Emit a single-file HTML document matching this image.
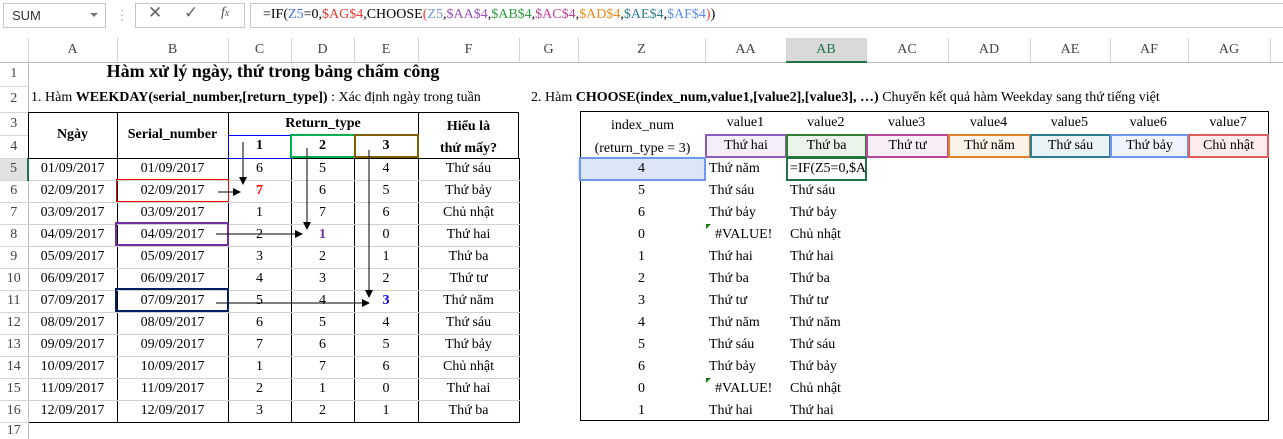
<!DOCTYPE html>
<html><head><meta charset="utf-8"><style>
*{box-sizing:border-box;margin:0;padding:0}
body{width:1283px;height:433px;overflow:hidden;background:#fff;font-family:"Liberation Serif",serif;font-size:14px;color:#000;position:relative}
.abs{position:absolute}
table{position:absolute;left:0;top:38px;border-collapse:collapse;table-layout:fixed;width:1283px}
td{padding:0;text-align:center;white-space:nowrap;overflow:hidden;vertical-align:middle;line-height:16px}
.ch{height:24px;border-right:1px solid #d4d4d4;border-bottom:1px solid #bdbdbd;color:#444;font-size:14px;background:#fff}
.rh{border-right:1px solid #bdbdbd;border-bottom:1px solid #d4d4d4;color:#444;background:#fff}
.g td.d{border-left:1px solid #000;border-right:1px solid #000;border-bottom:1px solid #d0d0d0}
.b{font-weight:bold}
.l{text-align:left;padding-left:4px}
.box{position:absolute;border:2px solid}
</style></head><body>
<div class="abs" style="left:0;top:0;width:1283px;height:32px;background:#fff"></div>
<div class="abs" style="left:3px;top:3px;width:103px;height:25px;border:1px solid #c6c6c6;font-family:'Liberation Sans',sans-serif;font-size:13px;color:#333;padding:4px 0 0 8px">SUM</div>
<div class="abs" style="left:90px;top:13px;border-left:4px solid transparent;border-right:4px solid transparent;border-top:4px solid #777"></div>
<div class="abs" style="left:120px;top:8px;color:#999;font-size:12px;line-height:5px">·<br>·<br>·</div>
<div class="abs" style="left:135px;top:3px;width:110px;height:25px;border:1px solid #c6c6c6"></div>
<div class="abs" style="left:148px;top:3px;font-family:'Liberation Sans',sans-serif;font-size:17px;color:#666">✕</div>
<div class="abs" style="left:184px;top:3px;font-size:17px;color:#666">✓</div>
<div class="abs" style="left:221px;top:5px;font-style:italic;font-size:14px;color:#555">f<span style="font-size:10px">x</span></div>
<div class="abs" style="left:250px;top:3px;width:1033px;height:25px;border:1px solid #c6c6c6;border-right:none"></div>
<div class="abs" style="left:263px;top:7px;font-size:14px;white-space:nowrap">=IF(<span style="color:#4a73e8">Z5</span>=0,<span style="color:#e53935">$AG$4</span>,CHOOSE<span style="color:#e53935">(</span><span style="color:#6d8fe6">Z5</span>,<span style="color:#9c4fc0">$AA$4</span>,<span style="color:#2e9d43">$AB$4</span>,<span style="color:#c2409d">$AC$4</span>,<span style="color:#e88a1a">$AD$4</span>,<span style="color:#2e7d8c">$AE$4</span>,<span style="color:#5b8def">$AF$4</span><span style="color:#e53935">)</span>)</div>

<table>
<colgroup><col style="width:28px"><col style="width:89px"><col style="width:111px"><col style="width:63px"><col style="width:63px"><col style="width:64px"><col style="width:101px"><col style="width:59px"><col style="width:127px"><col style="width:81px"><col style="width:80px"><col style="width:82px"><col style="width:82px"><col style="width:80px"><col style="width:78px"><col style="width:82px"><col style="width:13px"></colgroup>
<tr><td class="ch" style="background:#fff"></td><td class="ch">A</td><td class="ch">B</td><td class="ch">C</td><td class="ch">D</td><td class="ch">E</td><td class="ch">F</td><td class="ch">G</td><td class="ch">Z</td><td class="ch">AA</td><td class="ch" style="background:#d9d9d9;border-bottom:2px solid #217346;color:#217346">AB</td><td class="ch">AC</td><td class="ch">AD</td><td class="ch">AE</td><td class="ch">AF</td><td class="ch">AG</td><td class="ch"></td></tr>
<tr style="height:24px"><td class="rh">1</td><td colspan="16"></td></tr>
<tr style="height:26px"><td class="rh">2</td><td colspan="16"></td></tr>
<tr style="height:23px"><td class="rh">3</td><td colspan="16"></td></tr>
<tr style="height:23px"><td class="rh">4</td><td colspan="16"></td></tr>
<tr class="g" style="height:22px"><td class="rh" style="background:#e1e1e1;border-right:2px solid #217346">5</td><td class="d">01/09/2017</td><td class="d">01/09/2017</td><td class="d">6</td><td class="d">5</td><td class="d">4</td><td class="d">Thứ sáu</td><td></td><td style="background:#dce6f7">4</td><td class="l">Thứ năm</td><td class="l">=IF(Z5=0,$A</td><td colspan="6"></td></tr>
<tr class="g" style="height:22px"><td class="rh">6</td><td class="d">02/09/2017</td><td class="d">02/09/2017</td><td class="d b" style="color:#f00">7</td><td class="d">6</td><td class="d">5</td><td class="d">Thứ bảy</td><td></td><td>5</td><td class="l">Thứ sáu</td><td class="l">Thứ sáu</td><td colspan="6"></td></tr>
<tr class="g" style="height:22px"><td class="rh">7</td><td class="d">03/09/2017</td><td class="d">03/09/2017</td><td class="d">1</td><td class="d">7</td><td class="d">6</td><td class="d">Chủ nhật</td><td></td><td>6</td><td class="l">Thứ bảy</td><td class="l">Thứ bảy</td><td colspan="6"></td></tr>
<tr class="g" style="height:22px"><td class="rh">8</td><td class="d">04/09/2017</td><td class="d">04/09/2017</td><td class="d">2</td><td class="d b" style="color:#7030a0">1</td><td class="d">0</td><td class="d">Thứ hai</td><td></td><td>0</td><td class="l" style="padding-left:10px">#VALUE!</td><td class="l">Chủ nhật</td><td colspan="6"></td></tr>
<tr class="g" style="height:22px"><td class="rh">9</td><td class="d">05/09/2017</td><td class="d">05/09/2017</td><td class="d">3</td><td class="d">2</td><td class="d">1</td><td class="d">Thứ ba</td><td></td><td>1</td><td class="l">Thứ hai</td><td class="l">Thứ hai</td><td colspan="6"></td></tr>
<tr class="g" style="height:22px"><td class="rh">10</td><td class="d">06/09/2017</td><td class="d">06/09/2017</td><td class="d">4</td><td class="d">3</td><td class="d">2</td><td class="d">Thứ tư</td><td></td><td>2</td><td class="l">Thứ ba</td><td class="l">Thứ ba</td><td colspan="6"></td></tr>
<tr class="g" style="height:22px"><td class="rh">11</td><td class="d">07/09/2017</td><td class="d">07/09/2017</td><td class="d">5</td><td class="d">4</td><td class="d b" style="color:#00f">3</td><td class="d">Thứ năm</td><td></td><td>3</td><td class="l">Thứ tư</td><td class="l">Thứ tư</td><td colspan="6"></td></tr>
<tr class="g" style="height:22px"><td class="rh">12</td><td class="d">08/09/2017</td><td class="d">08/09/2017</td><td class="d">6</td><td class="d">5</td><td class="d">4</td><td class="d">Thứ sáu</td><td></td><td>4</td><td class="l">Thứ năm</td><td class="l">Thứ năm</td><td colspan="6"></td></tr>
<tr class="g" style="height:22px"><td class="rh">13</td><td class="d">09/09/2017</td><td class="d">09/09/2017</td><td class="d">7</td><td class="d">6</td><td class="d">5</td><td class="d">Thứ bảy</td><td></td><td>5</td><td class="l">Thứ sáu</td><td class="l">Thứ sáu</td><td colspan="6"></td></tr>
<tr class="g" style="height:22px"><td class="rh">14</td><td class="d">10/09/2017</td><td class="d">10/09/2017</td><td class="d">1</td><td class="d">7</td><td class="d">6</td><td class="d">Chủ nhật</td><td></td><td>6</td><td class="l">Thứ bảy</td><td class="l">Thứ bảy</td><td colspan="6"></td></tr>
<tr class="g" style="height:22px"><td class="rh">15</td><td class="d">11/09/2017</td><td class="d">11/09/2017</td><td class="d">2</td><td class="d">1</td><td class="d">0</td><td class="d">Thứ hai</td><td></td><td>0</td><td class="l" style="padding-left:10px">#VALUE!</td><td class="l">Chủ nhật</td><td colspan="6"></td></tr>
<tr class="g" style="height:22px"><td class="rh">16</td><td class="d" style="border-bottom:1px solid #000">12/09/2017</td><td class="d" style="border-bottom:1px solid #000">12/09/2017</td><td class="d" style="border-bottom:1px solid #000">3</td><td class="d" style="border-bottom:1px solid #000">2</td><td class="d" style="border-bottom:1px solid #000">1</td><td class="d" style="border-bottom:1px solid #000">Thứ ba</td><td></td><td>1</td><td class="l">Thứ hai</td><td class="l">Thứ hai</td><td colspan="6"></td></tr>
<tr style="height:14px"><td class="rh" style="border-bottom:none">17</td><td colspan="16"></td></tr>
</table>

<div class="abs b" style="left:28px;width:490px;top:61px;text-align:center;font-size:18px">Hàm xử lý ngày, thứ trong bảng chấm công</div>
<div class="abs" style="left:31px;top:90px;white-space:nowrap">1. Hàm <b>WEEKDAY(serial_number,[return_type])</b> : Xác định ngày trong tuần</div>
<div class="abs" style="left:531px;top:90px;white-space:nowrap">2. Hàm <b>CHOOSE(index_num,value1,[value2],[value3], …)</b> Chuyển kết quả hàm Weekday sang thứ tiếng việt</div>

<div class="abs" style="left:28px;top:112px;width:491px;height:47px;border:1px solid #000;border-bottom:1px solid #000"></div>
<div class="abs" style="left:117px;top:112px;height:47px;border-left:1px solid #000"></div>
<div class="abs" style="left:228px;top:112px;height:47px;border-left:1px solid #000"></div>
<div class="abs" style="left:418px;top:112px;height:47px;border-left:1px solid #000"></div>
<div class="abs b" style="left:28px;width:89px;top:127px;text-align:center">Ngày</div>
<div class="abs b" style="left:117px;width:111px;top:127px;text-align:center">Serial_number</div>
<div class="abs b" style="left:228px;width:190px;top:116px;text-align:center">Return_type</div>
<div class="abs b" style="left:418px;width:101px;top:116px;text-align:center;line-height:22px">Hiểu là<br>thứ mấy?</div>
<div class="abs" style="left:228px;top:135px;width:64px;height:24px;border:1px solid #00f"></div>
<div class="box" style="left:290px;top:134px;width:66px;height:24px;border-color:#00b050"></div>
<div class="box" style="left:354px;top:134px;width:65px;height:24px;border-color:#7f6000"></div>
<div class="abs b" style="left:228px;width:63px;top:138px;text-align:center">1</div>
<div class="abs b" style="left:291px;width:63px;top:138px;text-align:center">2</div>
<div class="abs b" style="left:354px;width:64px;top:138px;text-align:center">3</div>

<div class="abs" style="left:116px;top:179px;width:113px;height:23px;border:1px solid #f00"></div>
<div class="box" style="left:115px;top:222px;width:114px;height:24px;border-color:#7030a0"></div>
<div class="box" style="left:115px;top:288px;width:114px;height:24px;border-color:#002060"></div>

<svg class="abs" style="left:0;top:0" width="1283" height="433">
<defs><marker id="a" markerWidth="8" markerHeight="8" refX="7" refY="4" orient="auto" markerUnits="userSpaceOnUse"><path d="M0,0 L8,4 L0,8 z" fill="#000"/></marker></defs>
<g stroke="#000" stroke-width="1" fill="none">
<line x1="243" y1="142" x2="243" y2="184" marker-end="url(#a)"/>
<line x1="218" y1="192" x2="240" y2="192" marker-end="url(#a)"/>
<line x1="307" y1="148" x2="307" y2="229" marker-end="url(#a)"/>
<line x1="216" y1="234" x2="302" y2="234" marker-end="url(#a)"/>
<line x1="369" y1="150" x2="369" y2="297" marker-end="url(#a)"/>
<line x1="216" y1="303" x2="369" y2="303" marker-end="url(#a)"/>
</g>
<path d="M706,378 l5,0 l-5,5z M706,224 l5,0 l-5,5z" fill="#1a7a1a"/>
</svg>

<div class="abs" style="left:580px;top:111px;width:689px;height:310px;border:1px solid #000"></div>
<div class="abs" style="left:580px;width:125px;top:114px;text-align:center;line-height:23px">index_num<br>(return_type = 3)</div>
<div class="abs" style="left:705px;top:115px;width:564px;display:flex"><span style="width:81px;text-align:center">value1</span><span style="width:80px;text-align:center">value2</span><span style="width:82px;text-align:center">value3</span><span style="width:82px;text-align:center">value4</span><span style="width:80px;text-align:center">value5</span><span style="width:78px;text-align:center">value6</span><span style="width:82px;text-align:center">value7</span></div>
<div class="box" style="left:705px;top:134px;width:82px;height:24px;border-color:#8e5cc0;background:#f4eef9;text-align:center;line-height:20px">Thứ hai</div>
<div class="box" style="left:786px;top:134px;width:81px;height:24px;border-color:#2e7d32;background:#e9f3ea;text-align:center;line-height:20px">Thứ ba</div>
<div class="box" style="left:866px;top:134px;width:83px;height:24px;border-color:#b5489a;background:#f9edf6;text-align:center;line-height:20px">Thứ tư</div>
<div class="box" style="left:948px;top:134px;width:83px;height:24px;border-color:#e0832d;background:#fdf2e8;text-align:center;line-height:20px">Thứ năm</div>
<div class="box" style="left:1030px;top:134px;width:81px;height:24px;border-color:#2e7d8c;background:#e9f2f4;text-align:center;line-height:20px">Thứ sáu</div>
<div class="box" style="left:1110px;top:134px;width:79px;height:24px;border-color:#6f97ee;background:#eef3fd;text-align:center;line-height:20px">Thứ bảy</div>
<div class="box" style="left:1188px;top:134px;width:81px;height:24px;border-color:#e05d5d;background:#fcecec;text-align:center;line-height:20px">Chủ nhật</div>
<div class="box" style="left:579px;top:157px;width:127px;height:24px;border-color:#6f97ee"></div>
<div class="box" style="left:786px;top:157px;width:81px;height:24px;border-color:#217346"></div>
</body></html>
